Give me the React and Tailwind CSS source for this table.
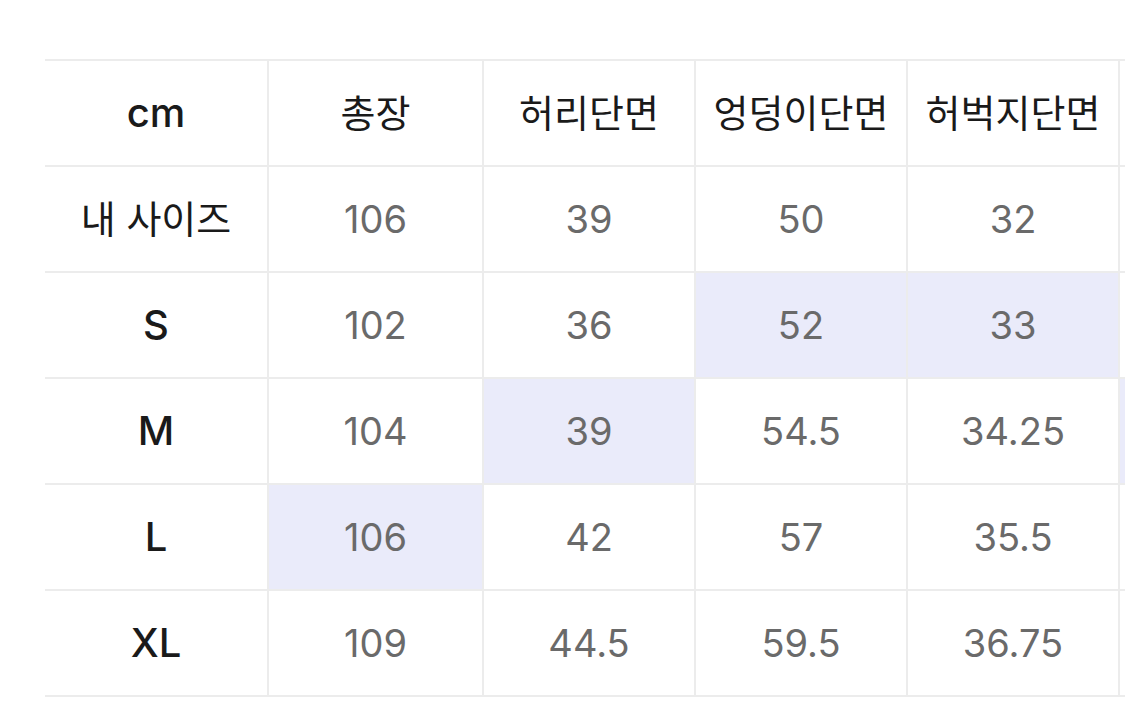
import React from "react";

const headers = ["cm", "총장", "허리단면", "엉덩이단면", "허벅지단면"];
const rows = [
  { label: "내 사이즈", values: ["106", "39", "50", "32"], hl: [], edge: false },
  { label: "S", values: ["102", "36", "52", "33"], hl: [2, 3], edge: false },
  { label: "M", values: ["104", "39", "54.5", "34.25"], hl: [1], edge: true },
  { label: "L", values: ["106", "42", "57", "35.5"], hl: [0], edge: false },
  { label: "XL", values: ["109", "44.5", "59.5", "36.75"], hl: [], edge: false },
];

const isKorean = (s) => /[\uac00-\ud7a3]/.test(s);

function Cell({ children, highlight, last }) {
  return (
    <div
      className={
        "h-[106px] flex items-center justify-center border-b-2 border-[#ececec] " +
        (last ? "" : "border-r-2 ") +
        (highlight ? "bg-[#eaebfa]" : "bg-white")
      }
    >
      {children}
    </div>
  );
}

function Label({ text }) {
  return isKorean(text) ? (
    <span className="text-[38px] font-normal text-[#1a1a1a]">{text}</span>
  ) : (
    <span className="text-[40px] font-medium text-[#1a1a1a]">{text}</span>
  );
}

export default function App() {
  return (
    <div
      className="w-[1125px] h-[701px] bg-white overflow-hidden pt-[59px] pl-[45px]"
      style={{ fontFamily: 'Inter, "Noto Sans CJK KR", sans-serif' }}
    >
      <div className="grid grid-cols-[224px_215px_212px_212px_212px_1fr] border-t-2 border-[#ececec]">
        {headers.map((h) => (
          <Cell key={h}>
            <Label text={h} />
          </Cell>
        ))}
        <Cell last />
        {rows.map((r) => (
          <React.Fragment key={r.label}>
            <Cell>
              <Label text={r.label} />
            </Cell>
            {r.values.map((v, i) => (
              <Cell key={i} highlight={r.hl.includes(i)}>
                <span className="text-[38px] font-normal text-[#6a6a6a]">{v}</span>
              </Cell>
            ))}
            <Cell last highlight={r.edge} />
          </React.Fragment>
        ))}
      </div>
    </div>
  );
}
